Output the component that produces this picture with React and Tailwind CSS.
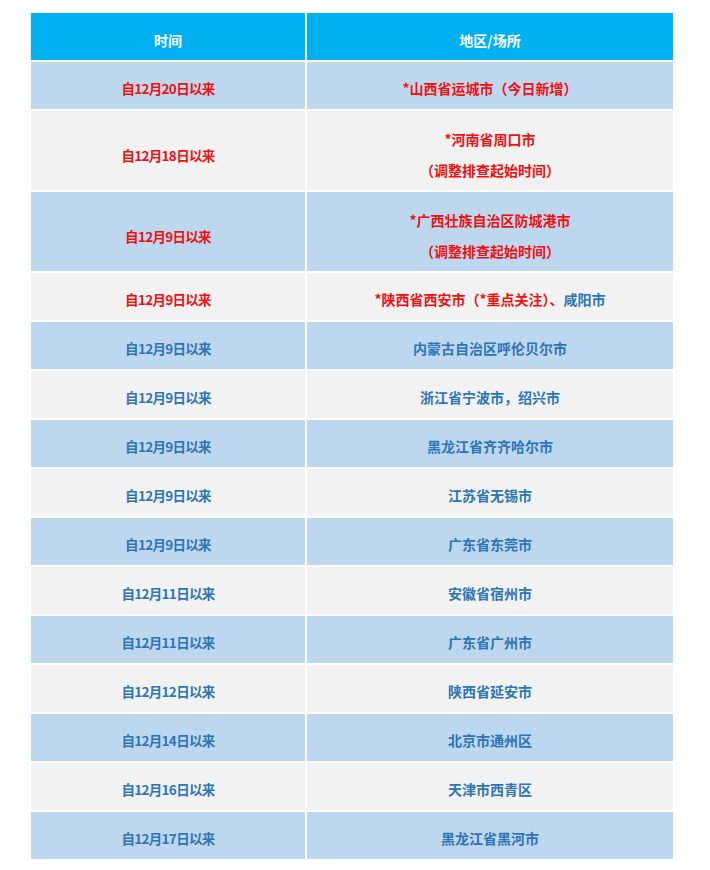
const rows = [
  { time: "自12月20日以来", place: [["*山西省运城市（今日新增）", "red"]], red: true },
  { time: "自12月18日以来", place: [["*河南省周口市", "red"]], note: "（调整排查起始时间）", red: true },
  { time: "自12月9日以来", place: [["*广西壮族自治区防城港市", "red"]], note: "（调整排查起始时间）", red: true },
  { time: "自12月9日以来", place: [["*陕西省西安市（*重点关注）、", "red"], ["咸阳市", "blue"]], red: true },
  { time: "自12月9日以来", place: [["内蒙古自治区呼伦贝尔市", "blue"]] },
  { time: "自12月9日以来", place: [["浙江省宁波市，绍兴市", "blue"]] },
  { time: "自12月9日以来", place: [["黑龙江省齐齐哈尔市", "blue"]] },
  { time: "自12月9日以来", place: [["江苏省无锡市", "blue"]] },
  { time: "自12月9日以来", place: [["广东省东莞市", "blue"]] },
  { time: "自12月11日以来", place: [["安徽省宿州市", "blue"]] },
  { time: "自12月11日以来", place: [["广东省广州市", "blue"]] },
  { time: "自12月12日以来", place: [["陕西省延安市", "blue"]] },
  { time: "自12月14日以来", place: [["北京市通州区", "blue"]] },
  { time: "自12月16日以来", place: [["天津市西青区", "blue"]] },
  { time: "自12月17日以来", place: [["黑龙江省黑河市", "blue"]] },
];

export default function App() {
  return (
    <div
      className="w-[710px] h-[870px] bg-white pt-[13px] pl-[31px]"
      style={{ fontFamily: '"Noto Sans CJK SC", "Noto Sans", sans-serif' }}
    >
      <div className="grid grid-cols-[274px_366px] gap-[2px] font-bold">
        <div className="h-[47px] pt-[8px] flex items-center justify-center bg-[#00b0f0] text-white text-[14px]">
          时间
        </div>
        <div className="h-[47px] pt-[8px] flex items-center justify-center bg-[#00b0f0] text-white text-[14px]">
          地区/场所
        </div>
        {rows.map((r, i) => {
          const bg = i % 2 === 0 ? "bg-[#bdd7ee]" : "bg-[#f2f2f2]";
          const tall = !!r.note;
          return (
            <div key={i} className="contents">
              <div
                className={`${bg} ${tall ? "h-[79px] pt-[10px]" : "h-[47px] pt-[6px]"} flex items-center justify-center text-[13.5px] tracking-[-0.7px] ${r.red ? "text-[#f01010]" : "text-[#2e75b6]"}`}
              >
                {r.time}
              </div>
              <div
                className={`${bg} ${tall ? "h-[79px] pt-[8px]" : "h-[47px] pt-[6px]"} flex flex-col items-center justify-center text-[14px] leading-[31px]`}
              >
                <div>
                  {r.place.map(([t, c], j) => (
                    <span key={j} className={c === "red" ? "text-[#f01010]" : "text-[#2e75b6]"}>
                      {t}
                    </span>
                  ))}
                </div>
                {r.note && <div className="text-[#f01010]">{r.note}</div>}
              </div>
            </div>
          );
        })}
      </div>
    </div>
  );
}
